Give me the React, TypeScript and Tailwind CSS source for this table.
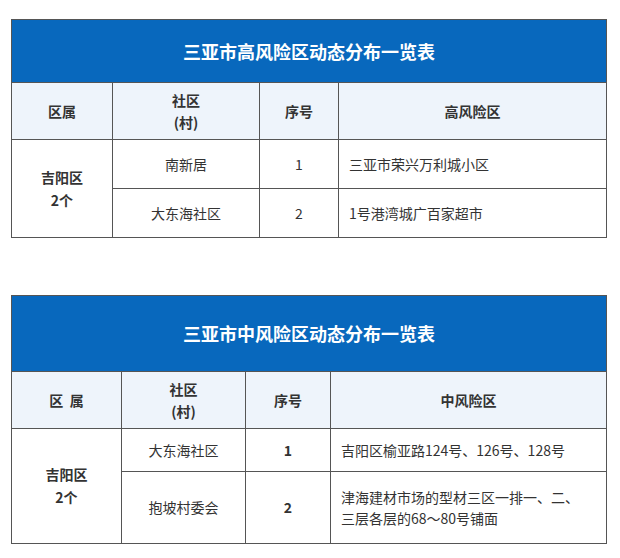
import React from "react"

type Row = { community: string; no: string; area: React.ReactNode; h: string }

type TableProps = {
  title: string
  titleH: string
  areaLabel: string
  districtLabel: string
  widths: string[]
  rows: Row[]
  boldNo?: boolean
}

function RiskTable({ title, titleH, areaLabel, districtLabel, widths, rows, boldNo }: TableProps) {
  return (
    <table className="w-[595px] table-fixed border-collapse text-[14px] text-[#333]">
      <colgroup>
        {widths.map((w, i) => (
          <col key={i} className={w} />
        ))}
      </colgroup>
      <thead>
        <tr>
          <th
            colSpan={4}
            className={`${titleH} border border-[#555] bg-[#0868bd] text-center text-[18px] font-bold text-white`}
          >
            {title}
          </th>
        </tr>
        <tr className="bg-[#eef4fb]">
          <th className="h-[57px] border border-[#555] font-bold whitespace-pre">{districtLabel}</th>
          <th className="h-[57px] border border-[#555] font-bold leading-[22px]">
            社区
            <br />
            (村)
          </th>
          <th className="h-[57px] border border-[#555] font-bold">序号</th>
          <th className="h-[57px] border border-[#555] font-bold">{areaLabel}</th>
        </tr>
      </thead>
      <tbody>
        {rows.map((r, i) => (
          <tr key={i}>
            {i === 0 && (
              <td rowSpan={rows.length} className="border border-[#555] text-center font-bold leading-[23px]">
                吉阳区
                <br />
                2个
              </td>
            )}
            <td className={`${r.h} border border-[#555] text-center`}>{r.community}</td>
            <td className={`${r.h} border border-[#555] text-center ${boldNo ? "font-bold" : ""}`}>{r.no}</td>
            <td className={`${r.h} border border-[#555] px-[10px] leading-[21px]`}>{r.area}</td>
          </tr>
        ))}
      </tbody>
    </table>
  )
}

export default function App() {
  return (
    <div className="min-h-[558px] w-[620px] bg-white pt-[19px] pl-[11px] font-['Noto_Sans_CJK_SC','Noto_Sans',sans-serif]">
      <RiskTable
        title="三亚市高风险区动态分布一览表"
        titleH="h-[63px]"
        areaLabel="高风险区"
        districtLabel="区属"
        widths={["w-[101px]", "w-[147px]", "w-[79px]", "w-[268px]"]}
        rows={[
          { community: "南新居", no: "1", area: "三亚市荣兴万利城小区", h: "h-[49px]" },
          { community: "大东海社区", no: "2", area: "1号港湾城广百家超市", h: "h-[49px]" },
        ]}
      />
      <div className="h-[57px]" />
      <RiskTable
        title="三亚市中风险区动态分布一览表"
        titleH="h-[76px]"
        areaLabel="中风险区"
        districtLabel="区  属"
        widths={["w-[110px]", "w-[124px]", "w-[85px]", "w-[276px]"]}
        boldNo
        rows={[
          { community: "大东海社区", no: "1", area: "吉阳区榆亚路124号、126号、128号", h: "h-[43px]" },
          {
            community: "抱坡村委会",
            no: "2",
            area: (
              <>
                津海建材市场的型材三区一排一、二、
                <br />
                三层各层的68～80号铺面
              </>
            ),
            h: "h-[72px]",
          },
        ]}
      />
    </div>
  )
}
